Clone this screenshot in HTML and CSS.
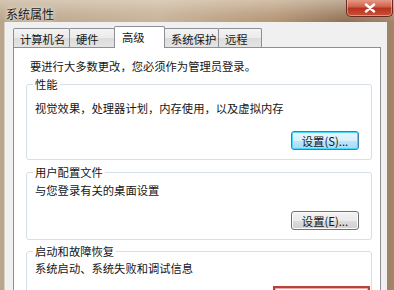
FILE: index.html
```html
<!DOCTYPE html>
<html lang="zh-CN">
<head>
<meta charset="utf-8">
<title>系统属性</title>
<link rel="stylesheet" href="styles.css">
</head>
<body>
<div class="window">
  <div class="titlebar">
    <span class="title">系统属性</span>
    <button class="close" aria-label="关闭">
      <svg width="14" height="10" viewBox="0 0 14 10"><path d="M3 1.5 L11 8.5 M11 1.5 L3 8.5" stroke="#fff" stroke-width="2.4" stroke-linecap="round"/></svg>
    </button>
  </div>
  <div class="client">
    <div class="tabs">
      <div class="tab t1">计算机名</div>
      <div class="tab t2">硬件</div>
      <div class="tab active t3">高级</div>
      <div class="tab t4">系统保护</div>
      <div class="tab t5">远程</div>
    </div>
    <div class="panel">
      <p class="intro">要进行大多数更改，您必须作为管理员登录。</p>
      <fieldset class="group g1">
        <legend>性能</legend>
        <p class="desc">视觉效果，处理器计划，内存使用，以及虚拟内存</p>
        <div class="actions"><button class="btn focus">设置(S)...</button></div>
      </fieldset>
      <fieldset class="group g2">
        <legend>用户配置文件</legend>
        <p class="desc">与您登录有关的桌面设置</p>
        <div class="actions"><button class="btn">设置(E)...</button></div>
      </fieldset>
      <fieldset class="group g3">
        <legend>启动和故障恢复</legend>
        <p class="desc">系统启动、系统失败和调试信息</p>
        <div class="actions"><div class="mark"><button class="btn">设置(T)...</button></div></div>
      </fieldset>
    </div>
  </div>
</div>
</body>
</html>
```

FILE: styles.css
```css
html, body {
  margin: 0;
  padding: 0;
}
body {
  width: 394px;
  height: 290px;
  overflow: hidden;
  font-family: "Noto Sans CJK SC", "Noto Sans", sans-serif;
  color: #161616;
  background: linear-gradient(90deg, #b9a58c 0%, #c8b49b 40%, #b49474 70%, #8e6f53 88%, #a38669 100%);
}
.window {
  display: flex;
  flex-direction: column;
  height: 290px;
}
.titlebar {
  height: 27px;
  display: flex;
  justify-content: space-between;
  align-items: flex-start;
  background: linear-gradient(180deg, rgba(235,225,210,0.55) 0%, rgba(220,205,185,0.25) 60%, rgba(200,180,155,0) 100%);
}
.title {
  font-size: 12px;
  line-height: 16px;
  margin: 6px 0 0 6px;
  color: #1a1a1a;
  text-shadow: 0 0 6px #efe6da, 0 0 3px #efe6da;
}
.close {
  width: 47px;
  height: 18px;
  margin: -1px 1px 0 0;
  padding: 0;
  border: 1px solid #6b2a20;
  border-top: none;
  border-radius: 0 0 5px 5px;
  background: linear-gradient(180deg, #e8a18f 0%, #d0624c 45%, #b8321d 55%, #c9523a 100%);
  box-shadow: inset 0 0 0 1px rgba(255,210,200,0.5);
  display: flex;
  align-items: center;
  justify-content: center;
}
.client {
  flex: 1;
  margin: 0 7px 0 4px;
  padding: 4px 6px 0 8px;
  background: #f0f0f0;
  border-left: 1px solid #d9d0c4;
  display: flex;
  flex-direction: column;
}
.tabs {
  display: flex;
  align-items: flex-end;
  height: 21px;
  position: relative;
  z-index: 1;
}
.tab {
  box-sizing: border-box;
  height: 19px;
  font-size: 11.3px;
  line-height: 16px;
  padding: 2px 0 0 6px;
  border: 1px solid #8e8f94;
  border-bottom: none;
  border-radius: 2px 2px 0 0;
  background: linear-gradient(180deg, #f3f3f3 0%, #ebebeb 50%, #dcdcdc 51%, #e4e4e4 100%);
  margin-right: -1px;
}
.t1 { width: 57px; }
.t2 { width: 46px; }
.t3 { width: 51px; }
.t4 { width: 55px; }
.t5 { width: 44px; }
.tab.active {
  height: 22px;
  margin-bottom: -1px;
  background: #ffffff;
  padding: 2px 0 0 7px;
  line-height: 16px;
  position: relative;
  z-index: 2;
}
.panel {
  flex: 1;
  background: #ffffff;
  border: 1px solid #8e8f94;
  border-bottom: none;
  padding: 10px 8px 0 12px;
}
.intro {
  margin: 0 0 0 4px;
  font-size: 11.3px;
  line-height: 16px;
}
.group {
  margin: 2px 0 0 0;
  padding: 8px 12px 9px 8px;
  border: 1px solid #d5dfe5;
  border-radius: 3px;
  box-shadow: inset 1px 1px 0 #fff;
}
.group legend {
  font-size: 11.3px;
  line-height: 16px;
  padding: 0 2px;
  margin-left: -2px;
}
.g2 { margin-top: 4px; padding-top: 2px; }
.g3 { margin-top: 3px; padding-top: 1px; }
.desc {
  margin: 0;
  font-size: 11.3px;
  line-height: 16px;
}
.actions {
  display: flex;
  justify-content: flex-end;
  margin-top: 15px;
}
.g2 .actions { margin-top: 13px; }
.g3 .actions { margin-top: 10px; margin-right: -11px; }
.btn {
  box-sizing: border-box;
  width: 68px;
  height: 19px;
  padding: 0;
  font-family: "Noto Sans CJK SC", "Noto Sans", sans-serif;
  font-size: 11.3px;
  line-height: 16px;
  color: #161616;
  border: 1px solid #707070;
  border-radius: 3px;
  background: linear-gradient(180deg, #f2f2f2 0%, #ebebeb 50%, #dddddd 51%, #cfcfcf 100%);
  box-shadow: inset 0 0 0 1px #fcfcfc;
}
.btn.focus {
  border-color: #3c7fb1;
  background: linear-gradient(180deg, #eaf6fd 0%, #d9f0fc 50%, #bee6fd 51%, #a7d9f5 100%);
  box-shadow: inset 0 0 0 1px #48d8fb;
}
.mark {
  border: 2px solid #b8413a;
  box-shadow: inset 0 0 0 1px #e9a6a0;
  padding: 7px 10px;
  width: 97px;
  box-sizing: border-box;
  display: flex;
  justify-content: center;
}
```
